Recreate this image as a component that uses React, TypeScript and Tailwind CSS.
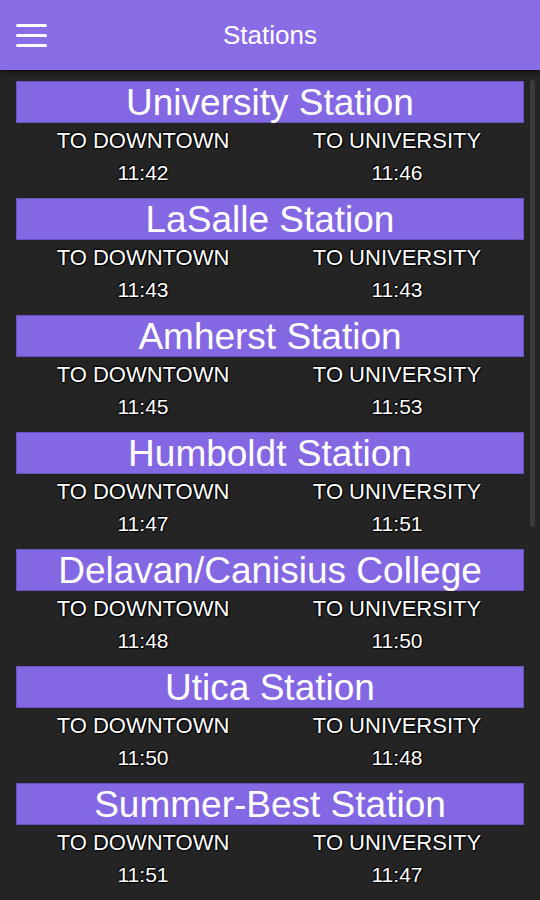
// Stations timetable — purple app bar, station name bands and two departure columns
const stations = [
  { name: 'University Station', down: '11:42', up: '11:46' },
  { name: 'LaSalle Station', down: '11:43', up: '11:43' },
  { name: 'Amherst Station', down: '11:45', up: '11:53' },
  { name: 'Humboldt Station', down: '11:47', up: '11:51' },
  { name: 'Delavan/Canisius College', down: '11:48', up: '11:50' },
  { name: 'Utica Station', down: '11:50', up: '11:48' },
  { name: 'Summer-Best Station', down: '11:51', up: '11:47' },
]

const outline = '[text-shadow:0_0_2px_#000,1px_1px_1px_#000,-1px_-1px_1px_#000]'

function Column({ label, time }: { label: string; time: string }) {
  return (
    <div className="flex flex-col items-center">
      <span className={`text-[22px] leading-[32px] text-white ${outline}`}>{label}</span>
      <span className={`text-[21px] leading-[32px] text-white ${outline}`}>{time}</span>
    </div>
  )
}

function StationBlock({ name, down, up }: { name: string; down: string; up: string }) {
  return (
    <div className="h-[117px] shrink-0">
      <div className="h-[42px] bg-[#8467e3] border border-[#6a52c0] flex items-center justify-center">
        <h2 className="text-[37px] leading-none text-white">{name}</h2>
      </div>
      <div className="grid grid-cols-2 pt-[2px]">
        <Column label="TO DOWNTOWN" time={down} />
        <Column label="TO UNIVERSITY" time={up} />
      </div>
    </div>
  )
}

export default function App() {
  return (
    <div className="relative w-[540px] h-[900px] overflow-hidden bg-[#242424] font-['Liberation_Sans',Arial,sans-serif]">
      <header className="relative z-10 h-[70px] bg-[#8a6ce6] flex items-center px-4 shadow-[0_2px_4px_rgba(0,0,0,0.6)]">
        <div className="flex flex-col gap-[7px] w-[31px]">
          <span className="h-[3px] bg-white rounded-sm" />
          <span className="h-[3px] bg-white rounded-sm" />
          <span className="h-[3px] bg-white rounded-sm" />
        </div>
        <h1 className="absolute inset-x-0 text-center text-[26px] text-white pointer-events-none">Stations</h1>
      </header>
      <main className="flex flex-col px-4 pt-[11px]">
        {stations.map((s) => (
          <StationBlock key={s.name} {...s} />
        ))}
        {/* next band just peeking in at the bottom edge */}
        <div className="h-[42px] shrink-0 bg-[#8467e3] border border-[#6a52c0]" />
      </main>
      <div className="absolute right-[5px] top-[80px] w-[5px] h-[447px] rounded-full bg-[#3a3a3a]" />
    </div>
  )
}
